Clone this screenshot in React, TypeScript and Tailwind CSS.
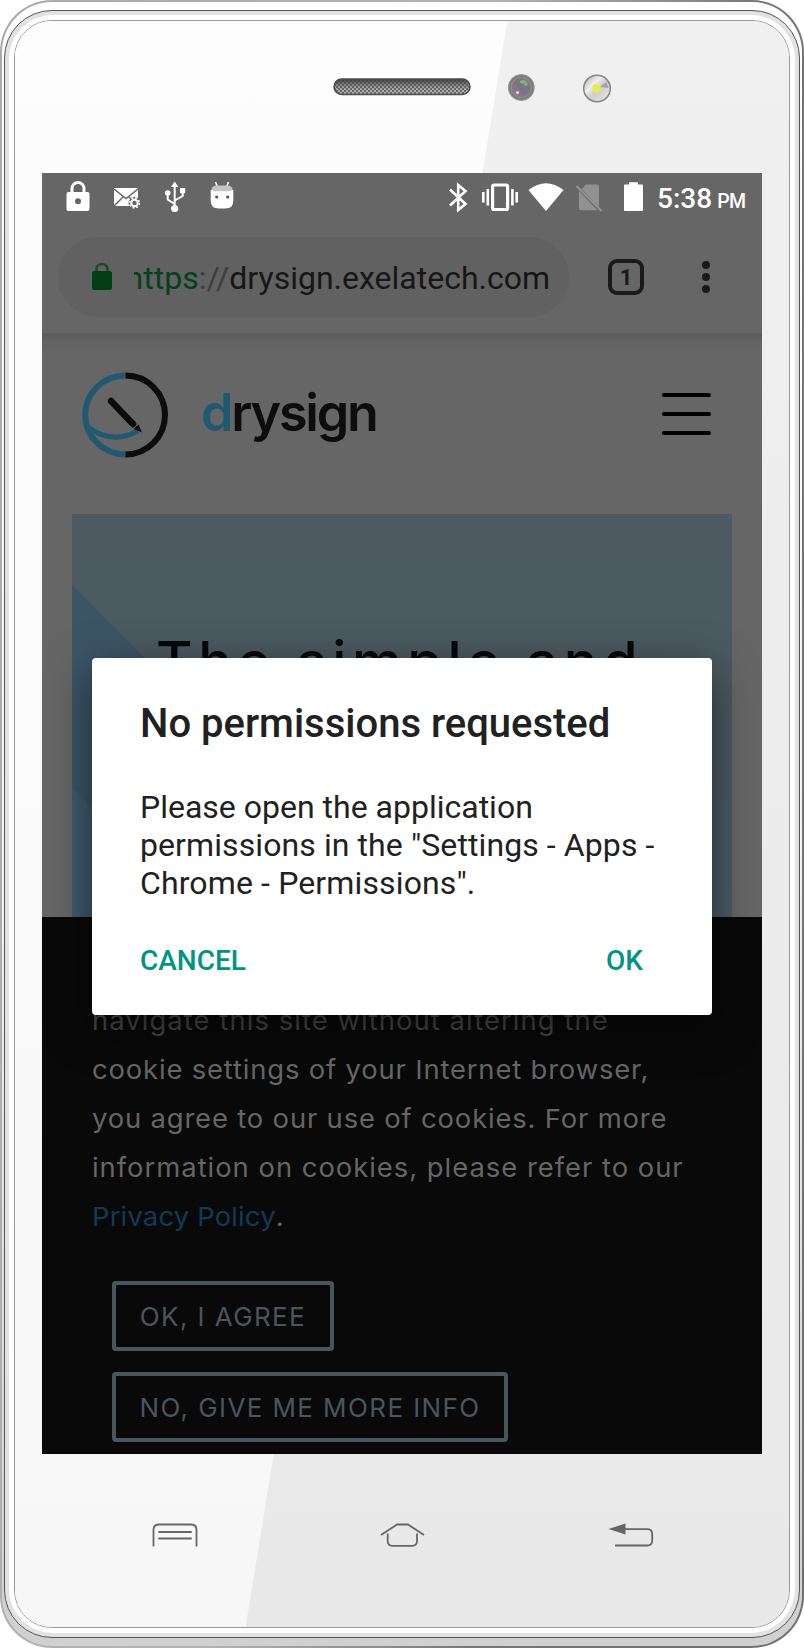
import React from "react";

/* An icon cut out of the page's coordinate space, so paths are written in page pixels. */
function Glyph({ x, y, w, h, className = "", children }: { x: number; y: number; w: number; h: number; className?: string; children: React.ReactNode }) {
  return (
    <svg width={w} height={h} viewBox={`${x} ${y} ${w} ${h}`} className={`block shrink-0 ${className}`} fill="none">
      {children}
    </svg>
  );
}

function StatusBar() {
  return (
    <div className="flex h-12 shrink-0 pl-6 text-white">
      <Glyph x={66} y={173} w={24} h={48}>
        <path d="M72 193v-4.500a6 6 0 0 1 12 0v4.500" stroke="#fff" strokeWidth="3" />
        <path fillRule="evenodd" fill="#fff" d="M68.500 192h19a2 2 0 0 1 2 2v15a2 2 0 0 1-2 2h-19a2 2 0 0 1-2-2v-15a2 2 0 0 1 2-2zM78 198.300a3 3 0 1 0 0 6 3 3 0 0 0 0-6z" />
      </Glyph>
      <Glyph x={113} y={173} w={28} h={48} className="ml-[23px]">
        <rect x="114" y="188" width="24" height="18" rx="1" fill="#fff" />
        <path d="M114 189l12 9.500 12-9.500M114 206l9-9M138 206l-9-9" stroke="#666" strokeWidth="1.500" />
        <circle cx="134.500" cy="203" r="6" fill="#666" />
        <circle cx="134.500" cy="203" r="3.200" stroke="#fff" strokeWidth="2" />
        <circle cx="134.500" cy="203" r="4.900" stroke="#fff" strokeWidth="1.600" strokeDasharray="1.900 1.950" />
      </Glyph>
      <Glyph x={164} y={173} w={22} h={48} className="ml-[23px]">
        <path d="M174.700 208V185M174.700 204l-7-4.500v-6M174.700 200.500l8-4.500v-5" stroke="#fff" strokeWidth="2" />
        <path d="M174.700 181.500l3.600 5.500h-7.200z" fill="#fff" />
        <circle cx="174.700" cy="208.500" r="3.600" fill="#fff" />
        <circle cx="167.700" cy="193" r="2.800" fill="#fff" />
        <rect x="180" y="188" width="5.200" height="5.200" fill="#fff" />
      </Glyph>
      <Glyph x={210} y={173} w={24} h={48} className="ml-6">
        <path d="M215.500 182l2 5M228.500 182l-2 5" stroke="#fff" strokeWidth="1.600" />
        <path fill="#fff" d="M210.700 190h22.600v11q0 7.500-8 7.500h-6.600q-8 0-8-7.500z" />
        <path fill="#c4c4c4" d="M211.500 190q0-4.500 5-4.500h11q5 0 5 4.500l-3 1.300h-15z" />
        <circle cx="216.700" cy="197" r="1.600" fill="#555" />
        <circle cx="227.700" cy="197" r="1.600" fill="#555" />
      </Glyph>

      <Glyph x={448} y={173} w={20} h={48} className="ml-[214px]">
        <path d="M450 189.500l15.500 14.500-7.300 6V185l7.300 6L450 205.500" stroke="#fff" strokeWidth="2.600" strokeLinejoin="miter" />
      </Glyph>
      <Glyph x={481} y={173} w={38} h={48} className="ml-[13px]">
        <rect x="492.600" y="185" width="15" height="24.500" rx="1.500" stroke="#fff" strokeWidth="3.200" />
        <path d="M483.300 192v10.500M487.800 189v16.500M512.400 189v16.500M516.700 192v10.500" stroke="#fff" strokeWidth="2.600" />
      </Glyph>
      <Glyph x={528} y={173} w={36} h={48} className="ml-[9px]">
        <path fill="#fff" d="M528.500 190q17.500-13.500 35 0L546 211z" />
      </Glyph>
      <Glyph x={575} y={173} w={28} h={48} className="ml-[11px]">
        <path fill="#919191" d="M586 184.500h11q2 0 2 2V207l-17.500-18zM579 191l18.500 19.300H581q-2 0-2-2z" />
        <path d="M576.500 186l25 25" stroke="#919191" strokeWidth="2.200" />
      </Glyph>
      <Glyph x={623} y={173} w={21} h={48} className="ml-5">
        <path fill="#fff" d="M629 182.300h9v2.200h4q1 0 1 1V210q0 1-1 1h-17q-1 0-1-1v-24.500q0-1 1-1h4z" />
      </Glyph>
      <div className="ml-[13px] flex h-12 items-baseline whitespace-nowrap font-medium">
        <span className="text-[28px] leading-[52px]">5:38</span>
        <span className="ml-[5px] text-[19.500px] leading-[52px] tracking-[-0.600px]">PM</span>
      </div>
    </div>
  );
}

function BrowserBar() {
  return (
    <div className="flex h-28 shrink-0 items-center pl-4">
      <div className="flex h-20 w-[511px] items-center rounded-full bg-[#616161] pl-[34px]">
        <Glyph x={92} y={262} w={20} h={30}>
          <path d="M96.500 271v-2a5.500 5 0 0 1 11 0v2" stroke="#23442e" strokeWidth="2.500" />
          <rect x="92" y="271" width="20" height="19" rx="2.500" fill="#023f14" />
        </Glyph>
        <div className="ml-[22px] mt-[2px] flex w-[416px] justify-end overflow-hidden whitespace-nowrap text-[32px] leading-[38px] text-[#171717]">
          <span className="text-[#063f1c]">https</span>
          <span className="text-[#3d3d3d]">://</span>
          <span>drysign.exelatech.com</span>
        </div>
      </div>
      <div className="ml-[39px] flex h-9 w-9 items-center justify-center rounded-[9px] border-4 border-[#1a1a1a] text-[22px] font-bold text-[#1a1a1a]">1</div>
      <div className="ml-[58px] flex flex-col gap-1">
        <i className="h-2 w-2 rounded-full bg-[#1a1a1a]" />
        <i className="h-2 w-2 rounded-full bg-[#1a1a1a]" />
        <i className="h-2 w-2 rounded-full bg-[#1a1a1a]" />
      </div>
    </div>
  );
}

function SiteHeader() {
  return (
    <div className="flex h-[181px] shrink-0 items-start bg-[linear-gradient(#5b5b5b,#636363_8px,#666_18px)] pl-10">
      <Glyph x={82} y={372} w={87} h={86} className="mt-[39px]">
        <path d="M125.500 375.500a40.300 39.500 0 0 0 0 79" stroke="#215a70" strokeWidth="6" />
        <path d="M125.500 375.500a39.500 39.500 0 0 1 0 79" stroke="#0c0c0c" strokeWidth="6" />
        <path d="M88 427q24 18 50 4" stroke="#215a70" strokeWidth="5" />
        <path d="M111 401l22 23" stroke="#0a0a0a" strokeWidth="6.500" strokeLinecap="round" />
        <path d="M133.500 429l5-4.500 3.500 8z" fill="#101010" />
      </Glyph>
      <div className="ml-8 mt-[48px] w-[180px] whitespace-nowrap font-['Inter','Liberation_Sans',sans-serif] text-[52px] font-semibold leading-[64px] tracking-[-2.200px] text-[#0d0d0d]">
        <span className="text-[#215a70]">d</span>rysign
      </div>
      <div className="ml-[281px] mt-[60px] flex w-[49px] flex-col gap-[15px]">
        <i className="h-[4px] rounded-sm bg-black" />
        <i className="h-[4px] rounded-sm bg-black" />
        <i className="h-[4px] rounded-sm bg-black" />
      </div>
    </div>
  );
}

function Hero() {
  return (
    <div className="relative mx-[30px] h-[403px] shrink-0 overflow-hidden bg-[linear-gradient(#4d5a61,#4b5b61_45%,#4b5c68)] pt-[113px]">
      <svg className="absolute inset-0" width="660" height="403" viewBox="0 0 660 403">
        <path d="M0 71L180 251V403H0z" fill="#3c5566" />
        <path d="M0 274L129 403H0z" fill="#425a6c" />
      </svg>
      <h1 className="relative whitespace-nowrap pl-[84px] font-['Inter','Liberation_Sans',sans-serif] text-[56px] font-medium leading-[70px] tracking-[5.600px] text-[#05080b]">The simple and</h1>
    </div>
  );
}

function CookieBar() {
  return (
    <div className="flex-1 bg-[#090909] pl-[50px] pt-[79px] font-['Inter','Liberation_Sans',sans-serif] text-[26px] text-[#666]">
      <p className="origin-left scale-x-[1.055] whitespace-nowrap leading-[49px]">
        <span className="tracking-[1px] text-[#484848]">navigate this site without altering the</span>
        <br />
        <span className="tracking-[0.780px]">cookie settings of your Internet browser,</span>
        <br />
        <span className="tracking-[0.780px]">you agree to our use of cookies. For more</span>
        <br />
        <span className="tracking-[0.920px]">information on cookies, please refer to our</span>
        <br />
        <a className="tracking-[0.150px] text-[#103a55]">Privacy Policy</a>.
      </p>
      <div className="ml-5 mt-10 flex flex-col items-start gap-[21px] text-[#4a555d]">
        <button className="h-[70px] w-[222px] whitespace-nowrap rounded-[4px] border-4 border-[#48565e] tracking-[1.400px]">OK, I AGREE</button>
        <button className="h-[70px] w-[396px] whitespace-nowrap rounded-[4px] border-4 border-[#48565e] tracking-[1.400px]">NO, GIVE ME MORE INFO</button>
      </div>
    </div>
  );
}

function PermissionDialog() {
  return (
    <div className="absolute left-[50px] top-[485px] h-[357px] w-[620px] rounded-[4px] bg-white px-12 pt-[42px] text-[#212121] shadow-[0_12px_44px_rgba(0,0,0,0.550)]">
      <h2 className="whitespace-nowrap text-[40px] font-medium leading-[47px]">No permissions requested</h2>
      <p className="mt-[41px] whitespace-nowrap text-[32px] leading-[38px]">
        Please open the application
        <br />
        <span className="tracking-[0.090px]">permissions in the "Settings - Apps -</span>
        <br />
        <span className="tracking-[0.130px]">Chrome - Permissions".</span>
      </p>
      <div className="mt-[42px] flex justify-between pr-[21px] text-[28px] font-medium leading-[33px] text-[#009482]">
        <button>CANCEL</button>
        <button>OK</button>
      </div>
    </div>
  );
}

function Sensors() {
  return (
    <div className="flex h-[152px] shrink-0 pl-[317px]">
      <Glyph x={332} y={21} w={140} h={152}>
        <defs>
          <pattern id="mesh" width="4" height="4" patternUnits="userSpaceOnUse">
            <rect width="4" height="4" fill="#666" />
            <circle cx="1" cy="1" r="0.900" fill="#ddd" />
            <circle cx="3" cy="3" r="0.900" fill="#ddd" />
          </pattern>
          <linearGradient id="meshShade" x2="0" y2="1">
            <stop stopColor="#333" stopOpacity="0.900" />
            <stop offset="0.700" stopColor="#666" stopOpacity="0.100" />
          </linearGradient>
        </defs>
        <rect x="334" y="79" width="136" height="15.500" rx="7.750" fill="url(#mesh)" />
        <rect x="334" y="79" width="136" height="15.500" rx="7.750" fill="url(#meshShade)" stroke="#4c4c4c" strokeWidth="1.500" />
      </Glyph>
      <Glyph x={507} y={21} w={29} h={152} className="ml-[35px]">
        <defs>
          <linearGradient id="lens" x1="0" y1="1" x2="1" y2="0">
            <stop stopColor="#98779a" />
            <stop offset="0.500" stopColor="#7a757c" />
            <stop offset="1" stopColor="#68896e" />
          </linearGradient>
        </defs>
        <circle cx="521.300" cy="87.500" r="13" fill="#7d7d7d" stroke="#999" />
        <circle cx="521.300" cy="87.500" r="10" fill="url(#lens)" stroke="#999090" strokeWidth="1" />
        <path d="M520 81q6-3 8 4l-3 1q-1-3-5-3z" fill="#80b084" />
        <path d="M523 90l6-1q-1 6-6 7z" fill="#79749a" />
        <circle cx="517.500" cy="92.500" r="1.500" fill="#ffd4f4" />
      </Glyph>
      <Glyph x={582} y={21} w={30} h={152} className="ml-[46px]">
        <defs>
          <linearGradient id="flash" x2="1" y2="1">
            <stop stopColor="#aaa" />
            <stop offset="0.350" stopColor="#eee" />
            <stop offset="0.550" stopColor="#ccc" />
            <stop offset="1" stopColor="#eee" />
          </linearGradient>
        </defs>
        <circle cx="597" cy="88.500" r="13.300" fill="url(#flash)" stroke="#858585" strokeWidth="1.500" />
        <path d="M600 87l6-5q2 3 2.500 6z" fill="#a2a2a2" />
        <path d="M593 85l3-1 5 4-1 3-3 2-4-1z" fill="#e8ee3c" />
      </Glyph>
    </div>
  );
}

function HardwareKeys() {
  return (
    <div className="flex flex-1 items-start pl-[137px] pt-[68px]">
      <Glyph x={152} y={1522} w={46} h={28}>
        <path d="M153.500 1546.500V1530q0-5.500 5.500-5.500h32q5.500 0 5.500 5.500v16.500M158.300 1532h33.500M158.300 1538.500h33.500" stroke="#666" strokeWidth="1.800" />
      </Glyph>
      <Glyph x={380} y={1522} w={46} h={28} className="ml-[182px]">
        <path d="M381 1535l16-10.500h11l16 10.500M387.700 1533.500v7.500q0 4.800 5 4.800h19.300q5 0 5-4.800v-7.500" stroke="#666" strokeWidth="1.800" />
      </Glyph>
      <Glyph x={608} y={1522} w={46} h={28} className="ml-[182px]">
        <path d="M622 1529.200h25q5.200 0 5.200 5v6.500q0 4.800-5.200 4.800h-32" stroke="#666" strokeWidth="1.800" />
        <path d="M608.500 1529l17-5.500v11z" fill="#666" />
      </Glyph>
    </div>
  );
}

export default function App() {
  return (
    <div className="h-[1648px] w-[804px] bg-white font-['Roboto','Liberation_Sans',sans-serif]">
      <div className="h-full rounded-[52px] bg-[linear-gradient(100deg,#aaa,#b4b4b4_45%,#777_70%,#707070)] p-[2px]">
        <div className="h-full rounded-[50px] bg-[linear-gradient(#fff,#f4f4f4_50%,#d0d0d0)] px-[2px] pb-[8px] pt-[8px]">
          <div className="h-full rounded-[48px] border border-[#555] bg-[#e2e2e2] p-[4px]">
            <div className="h-full rounded-[44px] bg-white p-[5px]">
              <div className="relative flex h-full flex-col overflow-hidden rounded-[38px] border border-[#999] bg-[#f4f4f4]">
                <svg className="absolute inset-0" width="774" height="1608" viewBox="15 21 774 1608" preserveAspectRatio="none">
                  <defs>
                    <linearGradient id="bright" x2="0" y2="1">
                      <stop stopColor="#fdfdfd" />
                      <stop offset="1" stopColor="#f7f7f7" />
                    </linearGradient>
                    <linearGradient id="dim" x2="0" y2="1">
                      <stop stopColor="#f0f0f0" />
                      <stop offset="1" stopColor="#e8e8e8" />
                    </linearGradient>
                  </defs>
                  <rect x="15" y="21" width="774" height="1608" fill="url(#dim)" />
                  <path d="M15 21H507.300L245.300 1629H15z" fill="url(#bright)" />
                </svg>
                <div className="relative flex h-full flex-col">
                  <Sensors />
                  <main className="relative ml-[27px] flex h-[1281px] w-[720px] shrink-0 flex-col bg-[#666]">
                    <StatusBar />
                    <BrowserBar />
                    <SiteHeader />
                    <Hero />
                    <CookieBar />
                    <PermissionDialog />
                  </main>
                  <HardwareKeys />
                </div>
              </div>
            </div>
          </div>
        </div>
      </div>
    </div>
  );
}
